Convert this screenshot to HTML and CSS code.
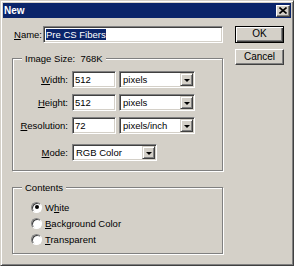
FILE: index.html
```html
<!DOCTYPE html>
<html lang="en">
<head>
  <meta charset="UTF-8">
  <title>New</title>
  <link rel="stylesheet" href="styles.css">
</head>
<body>
  <div class="dialog">
    <div class="titlebar">
      <span class="title">New</span>
      <span class="close">
        <svg width="8" height="7" viewBox="0 0 8 7"><path d="M0.5 0.5 L7.5 6.5 M7.5 0.5 L0.5 6.5" stroke="#000" stroke-width="1.6"/></svg>
      </span>
    </div>
    <div class="content">
      <div class="main">
        <div class="name-row">
          <span class="lbl"><u>N</u>ame:</span>
          <div class="field name-field"><span class="sel">Pre CS Fibers</span></div>
        </div>

        <fieldset class="group size-group">
          <legend>Image Size:&nbsp;&nbsp;768K</legend>
          <div class="grid">
            <span class="row-lbl"><u>W</u>idth:</span>
            <div class="field">512</div>
            <div class="field select">pixels<span class="arrow"></span></div>

            <span class="row-lbl"><u>H</u>eight:</span>
            <div class="field">512</div>
            <div class="field select">pixels<span class="arrow"></span></div>

            <span class="row-lbl"><u>R</u>esolution:</span>
            <div class="field">72</div>
            <div class="field select">pixels/inch<span class="arrow"></span></div>

            <span class="row-lbl mode"><u>M</u>ode:</span>
            <div class="field select mode mode-select">RGB Color<span class="arrow"></span></div>
          </div>
        </fieldset>

        <fieldset class="group contents-group">
          <legend>Contents</legend>
          <div class="radios">
            <div class="radio-row"><span class="radio checked"></span><span>W<u>h</u>ite</span></div>
            <div class="radio-row"><span class="radio"></span><span><u>B</u>ackground Color</span></div>
            <div class="radio-row"><span class="radio"></span><span><u>T</u>ransparent</span></div>
          </div>
        </fieldset>
      </div>
      <div class="buttons">
        <div class="btn default">OK</div>
        <div class="btn">Cancel</div>
      </div>
    </div>
  </div>
</body>
</html>
```

FILE: styles.css
```css
* {
  box-sizing: border-box;
}
body {
  margin: 0;
  background: #d4d0c8;
}
.dialog {
  width: 294px;
  height: 266px;
  padding: 2px;
  background: #d4d0c8;
  border: 1px solid;
  border-color: #d4d0c8 #404040 #404040 #d4d0c8;
  box-shadow: inset 1px 1px #fff, inset -1px -1px #808080;
  font: 9.5px "Liberation Sans", Arial, sans-serif;
  color: #000;
}
.titlebar {
  height: 15px;
  background: #0a246a;
  display: flex;
  align-items: center;
  justify-content: space-between;
  padding: 0 1px 0 1px;
}
.title {
  color: #fff;
  font-weight: bold;
  font-size: 10px;
}
.close {
  width: 14px;
  height: 12px;
  background: #d4d0c8;
  border: 1px solid;
  border-color: #fff #404040 #404040 #fff;
  box-shadow: inset -1px -1px #808080;
  display: flex;
  align-items: center;
  justify-content: center;
}
.close svg {
  display: block;
}
.content {
  display: flex;
  gap: 12px;
  padding: 8px 7px 0 9px;
}
.main {
  width: 211px;
}
.name-row {
  display: flex;
  align-items: center;
}
.name-row .lbl {
  width: 31px;
  padding-left: 2px;
}
.field {
  height: 17px;
  line-height: 15px;
  background: #fff;
  border: 1px solid;
  border-color: #808080 #fff #fff #808080;
  box-shadow: inset 1px 1px #404040, inset -1px -1px #d4d0c8;
  padding-left: 2px;
  white-space: nowrap;
}
.name-field {
  width: 180px;
  padding-left: 2px;
}
.sel {
  background: #0a246a;
  color: #fff;
}
.group {
  margin: 0;
  padding: 0;
  min-width: 0;
  width: 100%;
  border: 1px solid #808080;
  box-shadow: inset 1px 1px #fff, 1px 1px #fff;
}
.group legend {
  margin-left: 9px;
  padding: 0 3px;
  background: #d4d0c8;
  line-height: 11px;
}
.size-group {
  margin-top: 10px;
  padding: 7px 0 9px 0;
}
.grid {
  display: grid;
  grid-template-columns: 56px 44px 76px;
  column-gap: 3px;
  row-gap: 6px;
  align-items: center;
}
.row-lbl {
  text-align: right;
  padding-right: 1px;
}
.row-lbl.mode,
.field.mode {
  margin-top: 4px;
}
.select {
  display: flex;
  align-items: center;
  justify-content: space-between;
  padding-left: 3px;
}
.mode-select {
  grid-column: 2 / span 2;
  width: 85px;
}
.arrow {
  width: 13px;
  height: 13px;
  margin-right: 1px;
  background: #d4d0c8;
  border: 1px solid;
  border-color: #d4d0c8 #404040 #404040 #d4d0c8;
  box-shadow: inset 1px 1px #fff, inset -1px -1px #808080;
  display: flex;
  align-items: center;
  justify-content: center;
}
.arrow::after {
  content: "";
  border-left: 3px solid transparent;
  border-right: 3px solid transparent;
  border-top: 3px solid #000;
  margin-top: 1px;
}
.contents-group {
  margin-top: 11px;
}
.radios {
  padding: 6px 0 6px 18px;
}
.radio-row {
  display: flex;
  align-items: center;
  height: 16px;
  gap: 3px;
}
.radio {
  width: 11px;
  height: 11px;
  border-radius: 50%;
  background: #fff;
  border: 1px solid;
  border-color: #808080 #fff #fff #808080;
  box-shadow: inset 1px 1px #404040;
  display: flex;
  align-items: center;
  justify-content: center;
}
.radio.checked::after {
  content: "";
  width: 4px;
  height: 4px;
  border-radius: 50%;
  background: #000;
}
.buttons {
  display: flex;
  flex-direction: column;
  gap: 6px;
  width: 49px;
}
.btn {
  height: 16px;
  line-height: 14px;
  text-align: center;
  background: #d4d0c8;
  border: 1px solid;
  border-color: #fff #404040 #404040 #fff;
  box-shadow: inset -1px -1px #808080;
  font-size: 10px;
}
.btn.default {
  height: 17px;
  border-color: #000;
  box-shadow: inset 1px 1px #fff, inset -1px -1px #404040, inset -2px -2px #808080;
}
```
